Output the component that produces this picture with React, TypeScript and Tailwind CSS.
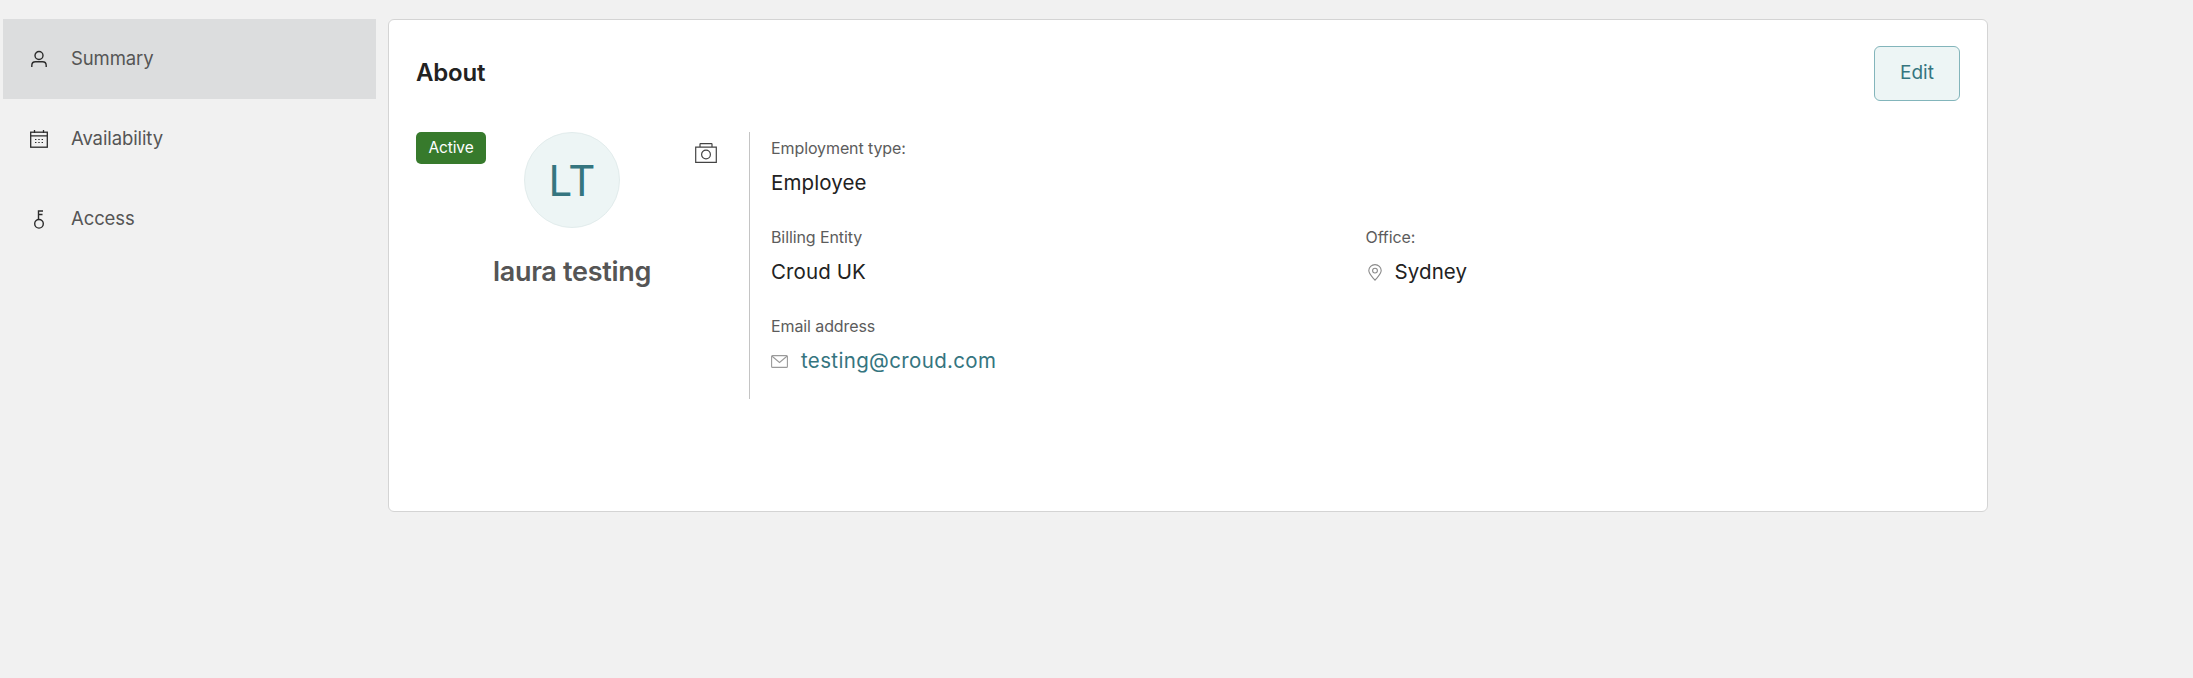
import React from "react";

const font = { fontFamily: '"Inter", "Open Sans", sans-serif' };

function UserIcon() {
    return (
        <svg width="18" height="18" viewBox="0 0 18 18" fill="none" stroke="#2b2b2b" strokeWidth="1.4">
            <circle cx="9" cy="5.5" r="4" />
            <path d="M1.8 17V15.5C1.8 13.2 3.6 11.8 5.5 11.8H12.5C14.4 11.8 16.2 13.2 16.2 15.5V17" />
        </svg>
    );
}

function CalendarIcon() {
    return (
        <svg width="18" height="18" viewBox="0 0 18 18" fill="none" stroke="#2b2b2b" strokeWidth="1.3">
            <rect x="0.7" y="2.2" width="16.6" height="15" />
            <path d="M0.7 5.8H17.3M4.5 0V3M13.5 0V3" />
            <path d="M5 9.5H6.4M8.3 9.5H9.7M11.6 9.5H13M5 12.5H6.4M8.3 12.5H9.7M11.6 12.5H13" strokeWidth="1.2" />
        </svg>
    );
}

function KeyIcon() {
    return (
        <svg width="18" height="19" viewBox="0 0 18 19" fill="none" stroke="#2b2b2b" strokeWidth="1.4">
            <circle cx="9" cy="13.8" r="4.3" />
            <path d="M8.5 9.5V1H13M8.5 4.5H12.5" />
        </svg>
    );
}

function CameraIcon() {
    return (
        <svg width="22" height="20" viewBox="0 0 22 20" fill="none" stroke="#444444" strokeWidth="1.2">
            <path d="M0.7 4.2H21.3V19.3H0.7Z" />
            <path d="M5 4V1.2C5 0.9 5.2 0.7 5.5 0.7H16.5C16.8 0.7 17 0.9 17 1.2V4" />
            <circle cx="11" cy="11.5" r="4.4" />
        </svg>
    );
}

function MailIcon() {
    return (
        <svg width="17" height="13" viewBox="0 0 17 13" fill="none" stroke="#9a9a9a" strokeWidth="1.1">
            <rect x="0.6" y="0.6" width="15.8" height="11.8" rx="1" />
            <path d="M0.8 1L8.5 7.5L16.2 1" />
        </svg>
    );
}

function PinIcon() {
    return (
        <svg width="14" height="17" viewBox="0 0 14 17" fill="none" stroke="#8a8a8a" strokeWidth="1.1">
            <path d="M7 16.2C4.5 13.2 0.8 10 0.8 6.6C0.8 3.2 3.6 0.6 7 0.6C10.4 0.6 13.2 3.2 13.2 6.6C13.2 10 9.5 13.2 7 16.2Z" />
            <circle cx="7" cy="6.6" r="2.4" />
        </svg>
    );
}

function NavItem({ label, icon, active }: { label: string; icon: React.ReactNode; active?: boolean }) {
    return (
        <div className={`flex h-20 items-center pl-[27px] ${active ? "bg-[#dcddde]" : ""}`}>
            <span className="flex w-[18px] justify-center">{icon}</span>
            <span className="ml-[23px] text-[18.5px] tracking-[-0.1px] text-[#555555]">{label}</span>
        </div>
    );
}

function Field({ label, children }: { label: string; children: React.ReactNode }) {
    return (
        <div className="h-[89px]">
            <div className="text-[16px] leading-[24px] tracking-[-0.1px] text-[#5c5c5c]">{label}</div>
            <div className="mt-[11px] flex h-[24px] items-center text-[20.5px] tracking-[0.1px] text-[#222222]">{children}</div>
        </div>
    );
}

export default function App() {
    return (
        <div className="flex h-[678px] items-start gap-3 bg-[#f1f1f1] pl-[3px] pt-[19px]" style={font}>
            <nav className="w-[373px]">
                <NavItem active label="Summary" icon={<UserIcon />} />
                <NavItem label="Availability" icon={<CalendarIcon />} />
                <NavItem label="Access" icon={<KeyIcon />} />
            </nav>

            <main className="h-[493px] w-[1600px] rounded-[6px] border border-[#d4d4d4] bg-white px-[27px]">
                <div className="flex h-[112px] items-center justify-between pb-[6px]">
                    <h2 className="text-[24px] font-semibold tracking-[-0.2px] text-[#222222]">About</h2>
                    <button className="flex h-[55px] w-[86px] items-center justify-center rounded-[6px] border border-[#83b5bb] bg-[#edf5f5] text-[19px] text-[#35757f]">
                        Edit
                    </button>
                </div>

                <div className="flex">
                    <div className="w-[312px]">
                        <div className="grid grid-cols-[1fr_auto_1fr]">
                            <div>
                                <span className="flex h-[32px] w-[70px] items-center justify-center rounded-[5px] bg-[#377a2c] text-[15.5px] tracking-[-0.1px] text-white">
                                    Active
                                </span>
                            </div>
                            <div className="flex h-24 w-24 items-center justify-center rounded-full border border-[#e2ecec] bg-[#edf5f5] text-[42px] text-[#35757f]">
                                LT
                            </div>
                            <div className="mr-[11px] mt-[11px] justify-self-end">
                                <CameraIcon />
                            </div>
                        </div>
                        <div className="mt-[24px] text-center text-[27px] font-semibold tracking-[-0.3px] text-[#555555]">laura testing</div>
                    </div>

                    <div className="ml-[21px] h-[267px] flex-1 border-l border-[#c4c4c4] pl-[21px] pt-[4px]">
                        <div className="grid grid-cols-2">
                            <Field label="Employment type:">Employee</Field>
                            <div />
                            <Field label="Billing Entity">Croud UK</Field>
                            <Field label="Office:">
                                <span className="ml-[2px] flex"><PinIcon /></span>
                                <span className="ml-[13px]">Sydney</span>
                            </Field>
                            <Field label="Email address">
                                <MailIcon />
                                <span className="ml-[13px] tracking-[0.35px] text-[#35757f]">testing@croud.com</span>
                            </Field>
                        </div>
                    </div>
                </div>
            </main>
        </div>
    );
}
